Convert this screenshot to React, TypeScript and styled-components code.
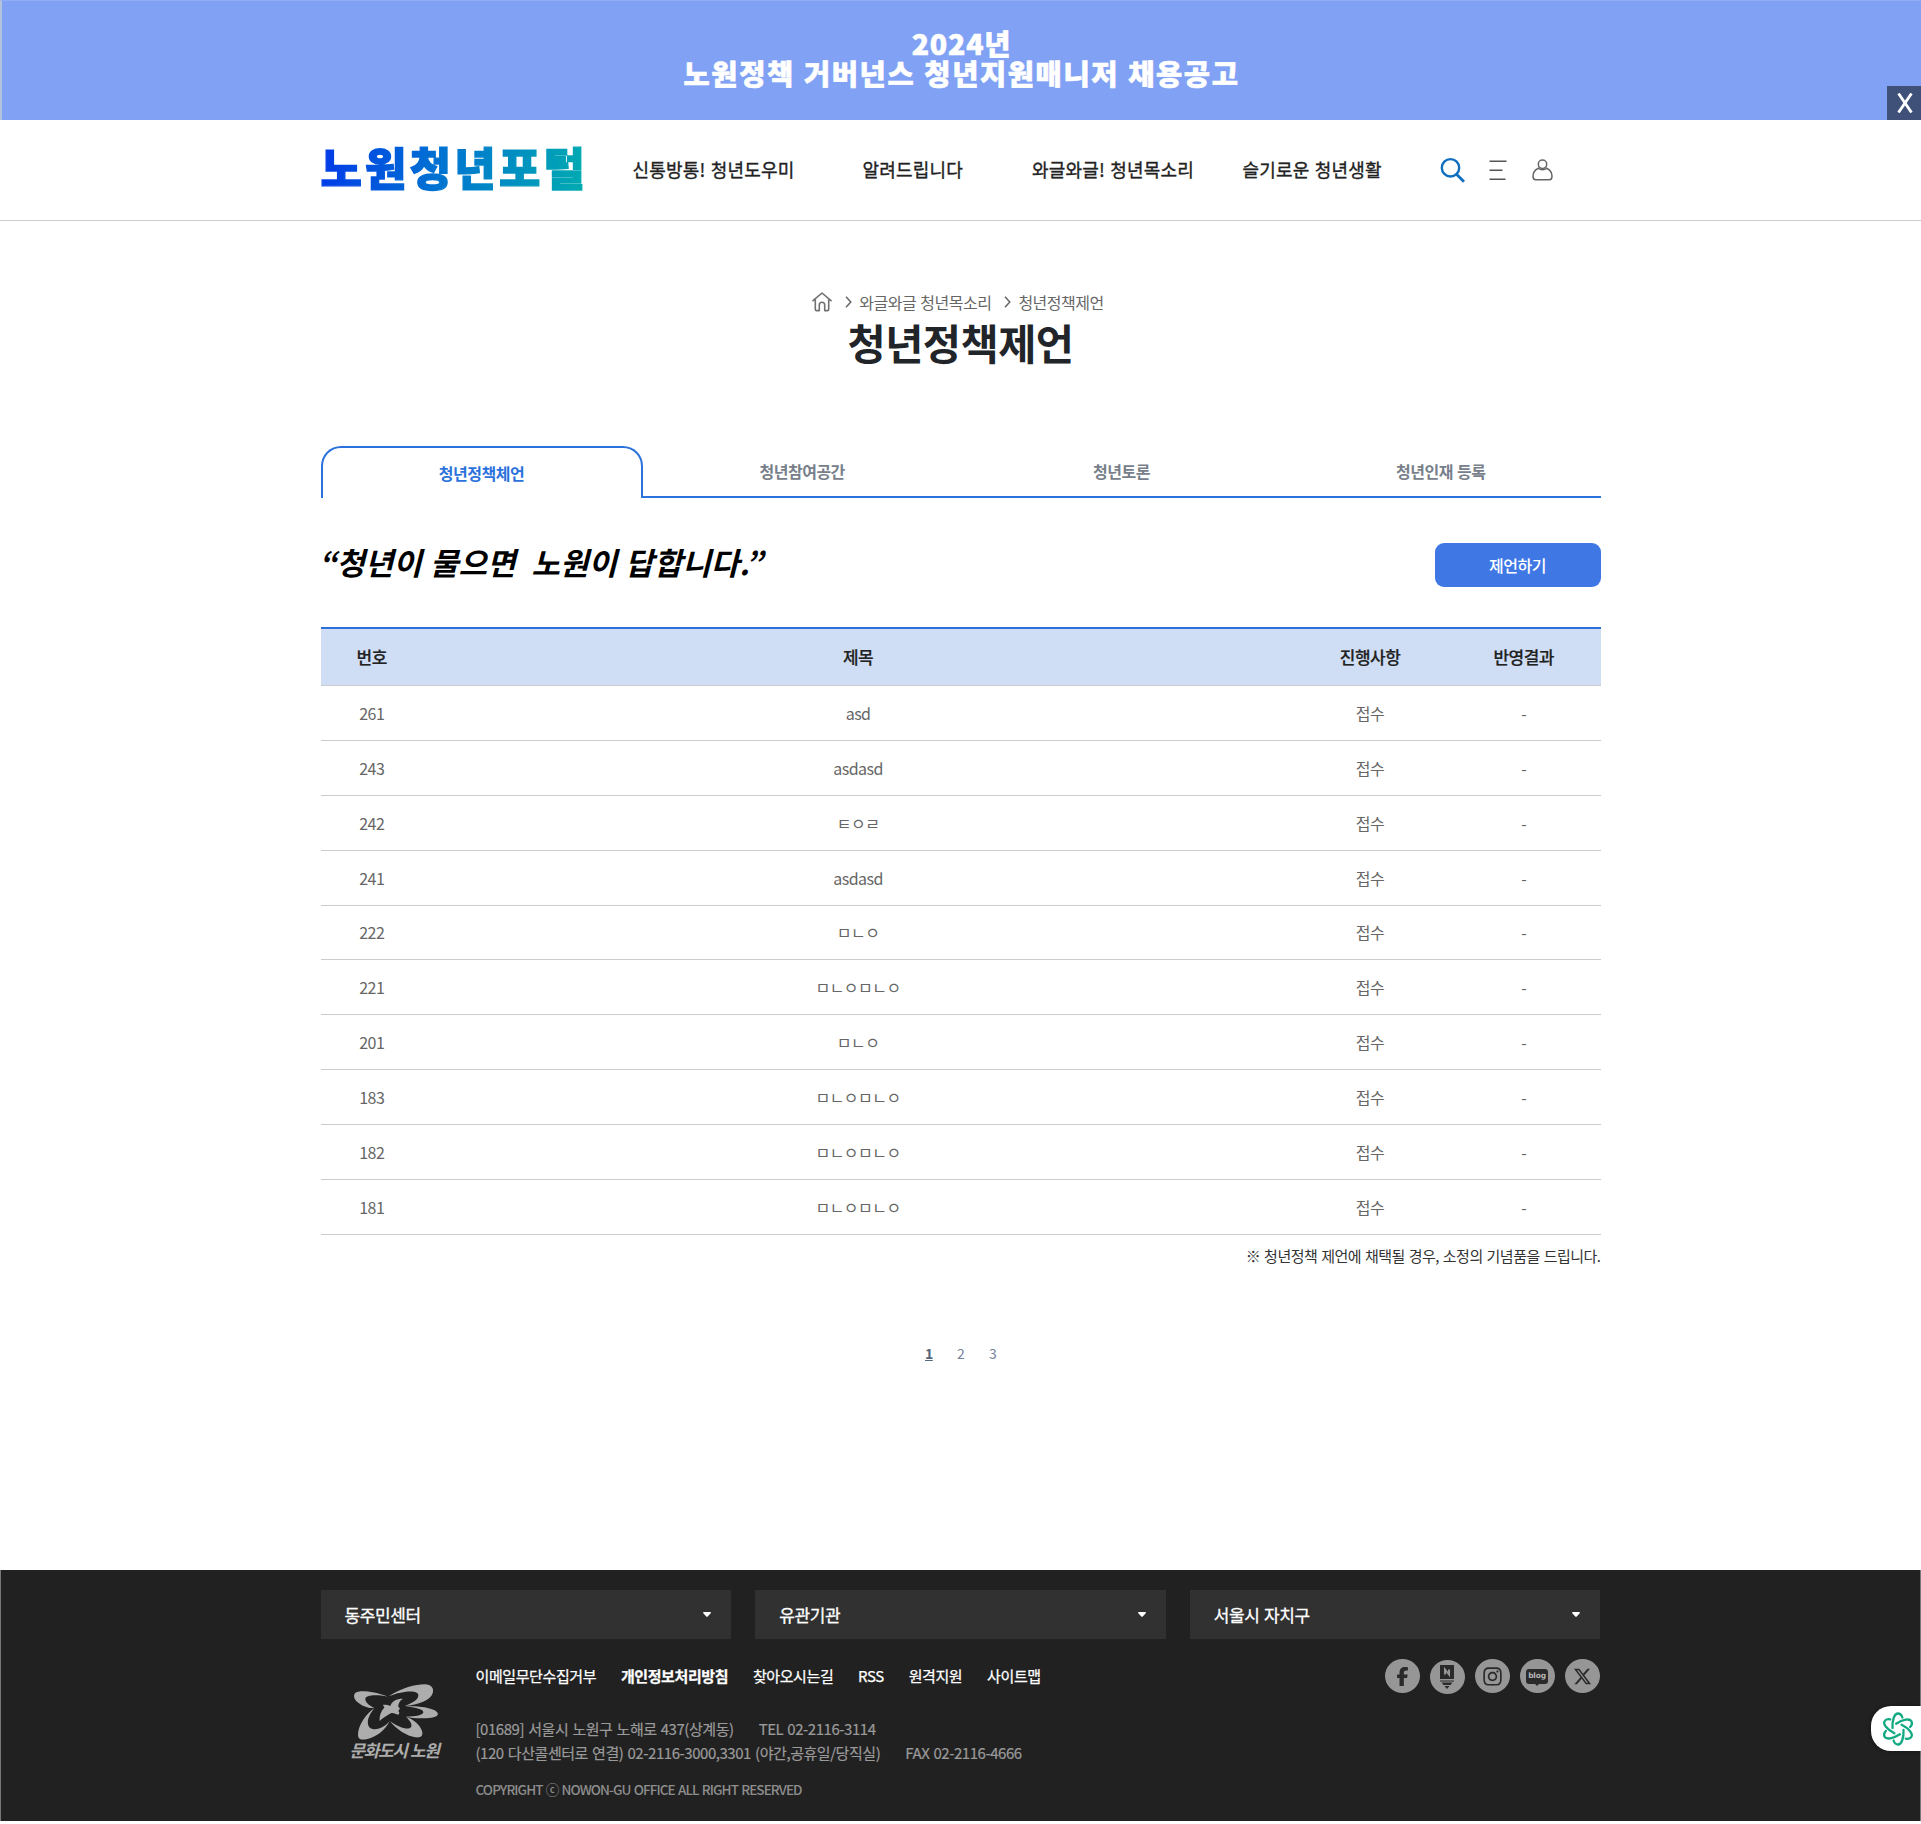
import React from 'react';
import styled, { createGlobalStyle, css } from 'styled-components';
import { FaFacebookF, FaInstagram, FaXTwitter } from 'react-icons/fa6';

const GlobalStyle = createGlobalStyle`
  *, *::before, *::after { box-sizing: border-box; }
  body {
    margin: 0;
    background: #fff;
    color: #212529;
    font-family: "Noto Sans CJK KR", "Noto Sans", sans-serif;
    font-size: 16px;
    letter-spacing: -0.5px;
    word-spacing: 1px;
  }
  a { color: inherit; text-decoration: none; }
  ul { margin: 0; padding: 0; list-style: none; }
  h1, p { margin: 0; }
`;

const Page = styled.div`
  width: 100%;
  height: 1824px;
  overflow: hidden;
`;

const Container = styled.div`
  width: 1280px;
  margin: 0 auto;
`;

/* ---------- Banner ---------- */

const Banner = styled.section`
  position: relative;
  height: 120px;
  padding-top: 27px;
  background: #80a1f4;
  border-top: 1px solid #91adf5;
  border-left: 2px solid #b4c3dc;
  color: #fff;
  text-align: center;
`;

const BannerLine = styled.p<{ $spacing: number }>`
  height: 30px;
  line-height: 30px;
  font-size: 28.5px;
  font-weight: 900;
  letter-spacing: ${(p) => p.$spacing}px;
  -webkit-text-stroke: 0.6px #fff;
`;

const CloseButton = styled.button`
  position: absolute;
  right: 0;
  bottom: 0;
  display: flex;
  align-items: center;
  justify-content: center;
  width: 34px;
  height: 34px;
  padding: 0 0 0 1px;
  border: 0;
  background: #3f5179;
`;

/* ---------- Header ---------- */

const Header = styled.header`
  height: 101px;
  border-bottom: 1px solid #ccc;
`;

const HeaderInner = styled(Container)`
  display: flex;
  align-items: center;
  height: 100px;
`;

const Logo = styled.a`
  width: 312px;
  height: 64px;
  line-height: 64px;
  margin-top: -6px;
  font-size: 45px;
  font-weight: 900;
  letter-spacing: 3.2px;
  white-space: nowrap;
  background: linear-gradient(100deg, #003be8 5px, #0072d2 120px, #00a9b2 262px);
  -webkit-background-clip: text;
  background-clip: text;
  color: transparent;
  -webkit-text-stroke: 1.3px transparent;
`;

const Nav = styled.nav`
  display: flex;
  margin-top: -2px;
  font-size: 18px;
  color: #222;
  white-space: nowrap;
  -webkit-text-stroke: 0.35px #222;
`;

const NavItem = styled.a<{ $width: number }>`
  width: ${(p) => p.$width}px;
  letter-spacing: 0.2px;
`;

const HeaderTools = styled.div`
  display: flex;
  align-items: center;
  gap: 24.5px;
  svg { display: block; }
`;

/* ---------- Page title ---------- */

const Main = styled.main`
  height: 1349px;
  padding-top: 69px;
`;

const Breadcrumb = styled.nav`
  display: flex;
  align-items: center;
  justify-content: center;
  height: 24px;
  color: #666;
  padding-right: 5px;
  svg { display: block; }
`;

const Crumb = styled.a`
  margin-left: 7px;
  margin-right: 13px;
  &:last-child { margin-right: 0; }
`;

const HomeLink = styled.a`
  margin-right: 13px;
`;

const Title = styled.h1`
  height: 54px;
  line-height: 57px;
  text-align: center;
  font-size: 41.5px;
  font-weight: 700;
`;

/* ---------- Tabs ---------- */

const Tabs = styled.div`
  display: grid;
  grid-template-columns: 322px repeat(3, 1fr);
  height: 52px;
  margin-top: 78px;
`;

const Tab = styled.a<{ $active?: boolean }>`
  display: flex;
  align-items: center;
  justify-content: center;
  font-weight: 700;
  color: #77808a;
  border-bottom: 2px solid #2b72dc;
  ${(p) =>
    p.$active &&
    css`
      color: #2b72dc;
      border: 2px solid #2b72dc;
      border-bottom: 0;
      border-radius: 20px 20px 0 0;
    `}
`;

/* ---------- Intro ---------- */

const Intro = styled.div`
  display: flex;
  align-items: center;
  justify-content: space-between;
  height: 44px;
  margin: 45px 0 40px;
`;

const Slogan = styled.p`
  margin-left: -2px;
  line-height: 44px;
  margin-top: -6px;
  font-size: 31px;
  font-weight: 700;
  font-style: italic;
  letter-spacing: 0;
  color: #000;
  white-space: pre;
`;

const ProposeButton = styled.button`
  width: 166px;
  height: 44px;
  padding: 0;
  border: 0;
  border-radius: 9px;
  background: #3f78e5;
  color: #fff;
  font: inherit;
  font-weight: 500;
  letter-spacing: -0.5px;
`;

/* ---------- Board ---------- */

const Board = styled.div`
  border-top: 2px solid #2b72dc;
`;

const BoardRow = styled.div<{ $head?: boolean }>`
  display: grid;
  grid-template-columns: 8% 68% 12% 12%;
  align-items: center;
  height: 54.88px;
  border-bottom: 1px solid #ccc;
  text-align: center;
  color: #666;
  ${(p) =>
    p.$head &&
    css`
      height: 57px;
      padding-bottom: 1px;
      background: #cfdef5;
      color: #222;
      font-size: 17px;
      font-weight: 500;
      -webkit-text-stroke: 0.2px #222;
    `}
`;

const Note = styled.p`
  height: 22px;
  line-height: 22px;
  margin-top: 10px;
  text-align: right;
  font-size: 15px;
  color: #333;
`;

const Pagination = styled.div`
  display: flex;
  justify-content: center;
  gap: 24px;
  height: 20px;
  margin-top: 76px;
  padding-left: 1px;
  line-height: 20px;
  font-size: 14px;
  color: #71829a;
`;

const PageLink = styled.a<{ $current?: boolean }>`
  width: 8px;
  ${(p) =>
    p.$current &&
    css`
      font-weight: 700;
      color: #55657c;
      text-decoration: underline;
    `}
`;

/* ---------- Footer ---------- */

const Footer = styled.footer`
  height: 251px;
  padding-top: 20px;
  background: #212121;
  border-left: 1px solid #777;
  border-right: 1px solid #777;
`;

const SelectRow = styled.div`
  display: grid;
  grid-template-columns: repeat(3, 1fr);
  gap: 24px;
`;

const SelectBox = styled.button`
  display: flex;
  align-items: center;
  justify-content: space-between;
  height: 49px;
  padding: 0 20px 0 24px;
  border: 0;
  background: #313131;
  color: #fff;
  font: inherit;
  font-size: 17px;
  letter-spacing: -0.4px;
  word-spacing: 1px;
  -webkit-text-stroke: 0.3px #fff;
`;

const FooterBody = styled.div`
  display: grid;
  grid-template-columns: 155px 1fr auto;
`;

const CityLogo = styled.div`
  display: flex;
  flex-direction: column;
  padding: 45px 0 0 32px;
  color: #adadad;
  svg { display: block; }
`;

const CityName = styled.span`
  margin-left: -3px;
  line-height: 20px;
  font-size: 17px;
  font-weight: 700;
  font-style: italic;
  letter-spacing: -1.4px;
  white-space: nowrap;
`;

const FooterLinks = styled.ul`
  display: flex;
  gap: 24.8px;
  height: 22px;
  margin-top: 26px;
  line-height: 22px;
  font-size: 15px;
  letter-spacing: -0.4px;
  color: #fff;
  white-space: nowrap;
`;

const FooterLink = styled.li<{ $strong?: boolean }>`
  font-weight: ${(p) => (p.$strong ? 700 : 400)};
  -webkit-text-stroke: 0.25px #fff;
`;

const Address = styled.address`
  margin-top: 29.500px;
  font-style: normal;
  font-size: 15px;
  line-height: 24px;
  color: #9a9a9a;
  white-space: nowrap;
  letter-spacing: -0.45px;
  word-spacing: 1.2px;
  -webkit-text-stroke: 0.2px #9a9a9a;
`;

const AddressLine = styled.div`
  display: flex;
  gap: 25px;
`;

const Copyright = styled.p`
  margin-top: 13.500px;
  font-size: 13.5px;
  font-weight: 500;
  line-height: 22px;
  letter-spacing: -0.9px;
  color: #8d8d8d;
`;

const SocialList = styled.div`
  display: flex;
  gap: 10px;
  padding: 20px 1px 0 0;
`;

const SocialLink = styled.a<{ $drop?: number }>`
  display: flex;
  align-items: center;
  justify-content: center;
  width: 35px;
  height: 34px;
  margin-top: ${(p) => p.$drop ?? 0}px;
  border-radius: 50%;
  background: #969696;
  color: #2a2a2a;
`;

const BlogBubble = styled.span`
  position: relative;
  width: 22px;
  height: 15px;
  border-radius: 3px;
  background: #2a2a2a;
  color: #b5b5b5;
  font-family: "DejaVu Sans", sans-serif;
  font-size: 7.5px;
  font-weight: 700;
  line-height: 14px;
  letter-spacing: -0.2px;
  text-align: center;
  &::after {
    content: "";
    position: absolute;
    left: 8px;
    top: 14px;
    border: 3px solid transparent;
    border-top-color: #2a2a2a;
  }
`;

const AssistantWidget = styled.button`
  position: fixed;
  right: 0;
  top: 1706px;
  display: flex;
  align-items: center;
  width: 50px;
  height: 45px;
  padding: 0 0 0 9px;
  border: 0;
  border-radius: 20px 0 0 20px;
  background: #fff;
  box-shadow: 0 0 5px rgba(0, 0, 0, 0.4);
`;

/* ---------- Icons ---------- */

const CloseIcon = () => (
  <svg width="16" height="20" viewBox="0 0 16 20" fill="none" stroke="#fff" strokeWidth="2.8">
    <path d="M1.500 .5 14.500 19.500M14.500 .5 1.500 19.500" />
  </svg>
);

const SearchIcon = () => (
  <svg width="25" height="26" viewBox="0 0 25 26" fill="none" stroke="#0f6fbe" strokeWidth="2.4">
    <circle cx="10.5" cy="10.8" r="8.7" />
    <path d="M16.500 17.300 24 24.800" strokeWidth="2.8" />
  </svg>
);

const MenuIcon = () => (
  <svg width="18" height="20" viewBox="0 0 18 20" fill="none" stroke="#555" strokeWidth="1.6">
    <path d="M.5 1.300H17.500M.5 10.300H13.500M.5 19.200H16.500" />
  </svg>
);

const UserIcon = () => (
  <svg width="21" height="22" viewBox="0 0 21 22" fill="none" stroke="#666" strokeWidth="1.5">
    <circle cx="10.5" cy="5.2" r="4.2" />
    <path d="M6.400 9.200C2.800 10.800 1 13.800 1 17.300c0 2.300.8 3.500 2.500 3.500h14c1.700 0 2.500-1.200 2.500-3.500 0-3.500-1.800-6.500-5.400-8.100-2.100 2-6.100 2-8.200 0Z" />
  </svg>
);

const HomeIcon = () => (
  <svg width="20" height="20" viewBox="0 0 20 20" fill="none" stroke="#707070" strokeWidth="1.6" strokeLinejoin="round" strokeLinecap="round">
    <path d="M1 8.700 10 1l9 7.700M3.300 7.500V17.200c0 .9.500 1.400 1.400 1.400h2.600V13c0-1.700 1-2.700 2.700-2.700s2.700 1 2.700 2.700v5.600h2.600c.9 0 1.400-.5 1.400-1.400V7.500" />
  </svg>
);

const ChevronIcon = () => (
  <svg width="7" height="12" viewBox="0 0 7 12" fill="none" stroke="#666" strokeWidth="1.5">
    <path d="M1 .8 5.800 6 1 11.200" />
  </svg>
);

const CaretIcon = () => (
  <svg width="8" height="5" viewBox="0 0 8 5" fill="#fff">
    <path d="M.8 0h6.400c.7 0 1 .7.500 1.200L4.700 4.600a1 1 0 0 1-1.400 0L.3 1.200C-.2.7.1 0 .8 0Z" />
  </svg>
);

const FlowerIcon = () => (
  <svg width="86" height="56" viewBox="158 371 258 168" fill="currentColor">
    <path d="M265 408C305 382 345 372 373 372c20 0 29 12 24 27-6 20-42 36-85 38 24-8 42-18 42-32 0-16-42-15-89 3Z" />
    <path d="M262 409c-34-14-70-18-88-15-18 3-15 20-4 30 13 12 32 20 52 19-18-9-27-18-27-27 0-12 33-14 67-7Z" />
    <path d="M223 443c-26 16-50 54-50 80 0 15 12 17 28 13 28-7 53-25 67-54-16 20-38 27-51 24-23-5-17-38 6-63Z" />
    <path d="M269 483c19 24 51 45 76 48 18 2 24-5 20-19-5-17-24-35-48-43 15 15 19 24 15 31-7 11-36 2-63-17Z" />
    <path d="M314 438c38-2 72 3 89 12 17 10 10 20-10 22-25 3-55 2-76-3 30 0 52-5 52-13 0-10-26-15-55-18Z" />
    <path d="M246 434c9-2 17-1 24 3 4-14 17-22 38-22-11 7-15 16-14 25l5 4-5 8c5 5 3 10-1 11-8-3-14-5-20-5-12 6-26 15-35 24-1-16 4-31 14-40-1-4-3-7-6-8Z" />
  </svg>
);

const PencilIcon = () => (
  <svg width="14" height="24" viewBox="0 0 14 24" fill="#2a2a2a">
    <path d="M0 0h14v14H0z" />
    <path d="M5 9.500v-5L9 9.500v-5" fill="none" stroke="#969696" strokeWidth="2" />
    <path d="M0 15.500h14v1H0zM1.500 17.500h11l-2 2.500h-7zM4.500 21h5L7 24z" />
  </svg>
);

const KnotIcon = () => (
  <svg width="36" height="36" viewBox="-18 -18 36 36" fill="none" stroke="#10a982" strokeWidth="2.3" strokeLinecap="round">
    {[0, 60, 120, 180, 240, 300].map((angle) => (
      <path key={angle} transform={`rotate(${angle})`} d="M-5.500-1C-6-9-3.500-15.500 0-15.500c2.300 0 3.700 1.800 4.400 4" />
    ))}
  </svg>
);

/* ---------- Data ---------- */

const NAV = [
  { label: '신통방통! 청년도우미', width: 230 },
  { label: '알려드립니다', width: 169.5 },
  { label: '와글와글! 청년목소리', width: 210.5 },
  { label: '슬기로운 청년생활', width: 197 },
];

const TABS = ['청년정책체언', '청년참여공간', '청년토론', '청년인재 등록'];

const ROWS: [number, string][] = [
  [261, 'asd'],
  [243, 'asdasd'],
  [242, 'ㅌㅇㄹ'],
  [241, 'asdasd'],
  [222, 'ㅁㄴㅇ'],
  [221, 'ㅁㄴㅇㅁㄴㅇ'],
  [201, 'ㅁㄴㅇ'],
  [183, 'ㅁㄴㅇㅁㄴㅇ'],
  [182, 'ㅁㄴㅇㅁㄴㅇ'],
  [181, 'ㅁㄴㅇㅁㄴㅇ'],
];

const LINKS = ['이메일무단수집거부', '개인정보처리방침', '찾아오시는길', 'RSS', '원격지원', '사이트맵'];

export default function App() {
  return (
    <Page>
      <GlobalStyle />
      <Banner>
        <BannerLine $spacing={0.8}>2024년</BannerLine>
        <BannerLine $spacing={1.6}>노원정책 거버넌스 청년지원매니저 채용공고</BannerLine>
        <CloseButton aria-label="닫기"><CloseIcon /></CloseButton>
      </Banner>

      <Header>
        <HeaderInner>
          <Logo>노원청년포털</Logo>
          <Nav>
            {NAV.map((item) => (
              <NavItem key={item.label} $width={item.width}>{item.label}</NavItem>
            ))}
          </Nav>
          <HeaderTools>
            <SearchIcon />
            <MenuIcon />
            <UserIcon />
          </HeaderTools>
        </HeaderInner>
      </Header>

      <Main>
        <Container>
          <Breadcrumb>
            <HomeLink><HomeIcon /></HomeLink>
            <ChevronIcon />
            <Crumb>와글와글 청년목소리</Crumb>
            <ChevronIcon />
            <Crumb>청년정책제언</Crumb>
          </Breadcrumb>
          <Title>청년정책제언</Title>

          <Tabs>
            {TABS.map((tab, i) => (
              <Tab key={tab} $active={i === 0}>{tab}</Tab>
            ))}
          </Tabs>

          <Intro>
            <Slogan>“청년이 물으면  노원이 답합니다.”</Slogan>
            <ProposeButton>제언하기</ProposeButton>
          </Intro>

          <Board>
            <BoardRow $head>
              <span>번호</span>
              <span>제목</span>
              <span>진행사항</span>
              <span>반영결과</span>
            </BoardRow>
            {ROWS.map(([id, title]) => (
              <BoardRow key={id}>
                <span>{id}</span>
                <span>{title}</span>
                <span>접수</span>
                <span>-</span>
              </BoardRow>
            ))}
          </Board>
          <Note>※ 청년정책 제언에 채택될 경우, 소정의 기념품을 드립니다.</Note>

          <Pagination>
            <PageLink $current>1</PageLink>
            <PageLink>2</PageLink>
            <PageLink>3</PageLink>
          </Pagination>
        </Container>
      </Main>

      <Footer>
        <Container>
          <SelectRow>
            {['동주민센터', '유관기관', '서울시 자치구'].map((label) => (
              <SelectBox key={label}>
                {label}
                <CaretIcon />
              </SelectBox>
            ))}
          </SelectRow>
          <FooterBody>
            <CityLogo>
              <FlowerIcon />
              <CityName>문화도시 노원</CityName>
            </CityLogo>
            <div>
              <FooterLinks>
                {LINKS.map((link) => (
                  <FooterLink key={link} $strong={link === '개인정보처리방침'}>{link}</FooterLink>
                ))}
              </FooterLinks>
              <Address>
                <AddressLine>
                  <span>[01689] 서울시 노원구 노해로 437(상계동)</span>
                  <span>TEL 02-2116-3114</span>
                </AddressLine>
                <AddressLine>
                  <span>(120 다산콜센터로 연결) 02-2116-3000,3301 (야간,공휴일/당직실)</span>
                  <span>FAX 02-2116-4666</span>
                </AddressLine>
              </Address>
              <Copyright>COPYRIGHT ⓒ NOWON-GU OFFICE ALL RIGHT RESERVED</Copyright>
            </div>
            <SocialList>
              <SocialLink><FaFacebookF size={19} /></SocialLink>
              <SocialLink $drop={1}><PencilIcon /></SocialLink>
              <SocialLink><FaInstagram size={21} /></SocialLink>
              <SocialLink><BlogBubble>blog</BlogBubble></SocialLink>
              <SocialLink><FaXTwitter size={19} /></SocialLink>
            </SocialList>
          </FooterBody>
        </Container>
      </Footer>
      <AssistantWidget aria-label="AI"><KnotIcon /></AssistantWidget>
    </Page>
  );
}
